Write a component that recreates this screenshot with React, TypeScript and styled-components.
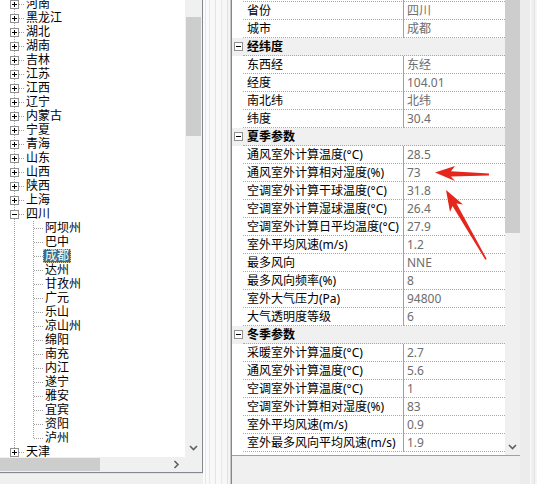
import React from "react";
import styled, { createGlobalStyle } from "styled-components";

const GlobalStyle = createGlobalStyle`
  html, body {
    margin: 0;
    padding: 0;
    background: #f0f0f0;
  }
  body {
    font-family: "Noto Sans", "Noto Sans CJK SC", sans-serif;
    font-size: 12px;
  }
`;

const DOT = "#a0a0a0";

const provincesBefore = [
  "河南", "黑龙江", "湖北", "湖南", "吉林", "江苏", "江西", "辽宁",
  "内蒙古", "宁夏", "青海", "山东", "山西", "陕西", "上海",
];
const sichuanCities = [
  "阿坝州", "巴中", "成都", "达州", "甘孜州", "广元", "乐山", "凉山州",
  "绵阳", "南充", "内江", "遂宁", "雅安", "宜宾", "资阳", "泸州",
];
const provincesAfter = ["天津"];

type Prop = { name: string; value: string };
type Section = { title?: string; items: Prop[] };

// first entry is the row scrolled just above the top edge
const sections: Section[] = [
  {
    items: [
      { name: "", value: "" },
      { name: "省份", value: "四川" },
      { name: "城市", value: "成都" },
    ],
  },
  {
    title: "经纬度",
    items: [
      { name: "东西经", value: "东经" },
      { name: "经度", value: "104.01" },
      { name: "南北纬", value: "北纬" },
      { name: "纬度", value: "30.4" },
    ],
  },
  {
    title: "夏季参数",
    items: [
      { name: "通风室外计算温度(°C)", value: "28.5" },
      { name: "通风室外计算相对湿度(%)", value: "73" },
      { name: "空调室外计算干球温度(°C)", value: "31.8" },
      { name: "空调室外计算湿球温度(°C)", value: "26.4" },
      { name: "空调室外计算日平均温度(°C)", value: "27.9" },
      { name: "室外平均风速(m/s)", value: "1.2" },
      { name: "最多风向", value: "NNE" },
      { name: "最多风向频率(%)", value: "8" },
      { name: "室外大气压力(Pa)", value: "94800" },
      { name: "大气透明度等级", value: "6" },
    ],
  },
  {
    title: "冬季参数",
    items: [
      { name: "采暖室外计算温度(°C)", value: "2.7" },
      { name: "通风室外计算温度(°C)", value: "5.6" },
      { name: "空调室外计算温度(°C)", value: "1" },
      { name: "空调室外计算相对湿度(%)", value: "83" },
      { name: "室外平均风速(m/s)", value: "0.9" },
      { name: "室外最多风向平均风速(m/s)", value: "1.9" },
    ],
  },
];

/* ---------- layout ---------- */

const Window = styled.div`
  position: relative;
  width: 537px;
  height: 484px;
  overflow: hidden;
  display: flex;
  background: #f0f0f0;
  font-family: "Noto Sans", "Noto Sans CJK SC", sans-serif;
  font-size: 12px;
  color: #000;
`;

const LeftColumn = styled.div`
  width: 203px;
  flex: none;
  display: flex;
  flex-direction: column;
`;

const TreeFrame = styled.div`
  display: grid;
  grid-template-columns: 185px 17px;
  grid-template-rows: 457px 15px;
  border-right: 1px solid #828790;
  border-bottom: 1px solid #828790;
  background: #fff;
`;

const BottomStrip = styled.div`
  flex: 1;
  background: #f0f0f0;
  border-top: 1px solid #e3e3e3;
`;

const Splitter = styled.div`
  width: 28px;
  flex: none;
  background: linear-gradient(
    to right,
    #fbfbfb 0 2px,
    #e6e6e6 2px 3px,
    #fafafa 3px 6px,
    #e9e9e9 6px 7px,
    #f8f8f8 7px 12px,
    #e4e4e4 12px 13px,
    #f9f9f9 13px 18px,
    #e8e8e8 18px 19px,
    #f7f7f7 19px 24px,
    #e2e2e2 24px 25px,
    #f4f4f4 25px 27px,
    #c9c9c9 27px 28px
  );
`;

const RightPane = styled.div`
  width: 288px;
  flex: none;
  display: flex;
  flex-direction: column;
  border-left: 1px solid #828790;
`;

const RightEdge = styled.div`
  flex: 1;
  background: linear-gradient(
    to right,
    #ececec 0 10px,
    #fafafa 10px 11px,
    #efefef 11px 14px,
    #e2e2e2 14px 15px,
    #f5f5f5 15px 17px
  );
`;

/* ---------- tree ---------- */

const TreeViewport = styled.div`
  overflow: hidden;
  background: #fff;
`;

const TreeList = styled.div`
  margin-top: -3px;
`;

const TreeRow = styled.div`
  display: flex;
  align-items: center;
  height: 14px;
  white-space: nowrap;
`;

const Lines = styled.svg`
  display: block;
  flex: none;
`;

const NodeLabel = styled.span<{ $selected?: boolean }>`
  display: block;
  height: 14px;
  line-height: 14px;
  padding: 0 2px;
  box-sizing: border-box;
  background: ${(p) => (p.$selected ? "#3c6e8c" : "transparent")};
  color: ${(p) => (p.$selected ? "#fff" : "#000")};
  outline: ${(p) => (p.$selected ? "1px dotted #d8c79a" : "none")};
  outline-offset: -1px;
`;

function Expander({ open }: { open: boolean }) {
  return (
    <>
      <rect x="10.5" y="3.5" width="8" height="8" fill="#fff" stroke="#919191" />
      <line x1="12" y1="7.5" x2="17" y2="7.5" stroke="#000" />
      {!open && <line x1="14.5" y1="5" x2="14.5" y2="10" stroke="#000" />}
    </>
  );
}

function ProvinceNode({ name, open }: { name: string; open?: boolean }) {
  return (
    <TreeRow>
      <Lines width="24" height="14">
        <line x1="14.5" y1="0" x2="14.5" y2="14" stroke={DOT} strokeDasharray="1 1" />
        <line x1="19" y1="7.5" x2="24" y2="7.5" stroke={DOT} strokeDasharray="1 1" />
        <Expander open={!!open} />
      </Lines>
      <NodeLabel>{name}</NodeLabel>
    </TreeRow>
  );
}

function CityNode({ name, last, selected }: { name: string; last?: boolean; selected?: boolean }) {
  return (
    <TreeRow>
      <Lines width="43" height="14">
        <line x1="14.5" y1="0" x2="14.5" y2="14" stroke={DOT} strokeDasharray="1 1" />
        <line x1="33.5" y1="0" x2="33.5" y2={last ? 8 : 14} stroke={DOT} strokeDasharray="1 1" />
        <line x1="34" y1="7.5" x2="43" y2="7.5" stroke={DOT} strokeDasharray="1 1" />
      </Lines>
      <NodeLabel $selected={selected}>{name}</NodeLabel>
    </TreeRow>
  );
}

/* ---------- scrollbars ---------- */

const VBar = styled.div<{ $width: number }>`
  width: ${(p) => p.$width}px;
  display: flex;
  flex-direction: column;
  background: #f0f0f0;
`;

const HBar = styled.div`
  display: flex;
  background: #f0f0f0;
`;

const Track = styled.div<{ $size?: number }>`
  flex: ${(p) => (p.$size ? `0 0 ${p.$size}px` : "1")};
`;

const VThumb = styled.div<{ $size: number; $inset?: number }>`
  flex: 0 0 ${(p) => p.$size}px;
  margin: 0 ${(p) => p.$inset ?? 1}px;
  background: #cdcdcd;
`;

const HThumb = styled.div<{ $size: number }>`
  flex: 0 0 ${(p) => p.$size}px;
  margin: 1px 0;
  background: #cdcdcd;
`;

const ArrowButton = styled.div<{ $size: number }>`
  flex: 0 0 ${(p) => p.$size}px;
  display: flex;
  align-items: center;
  justify-content: center;
`;

const Corner = styled.div`
  background: #f0f0f0;
`;

function Chevron({ dir }: { dir: "down" | "right" }) {
  const pts = dir === "down" ? "1,2 4.5,5.5 8,2" : "2.5,1 6,4.5 2.5,8";
  return (
    <svg width="9" height="9">
      <polyline points={pts} fill="none" stroke="#606060" strokeWidth="1.6" />
    </svg>
  );
}

/* ---------- property grid ---------- */

const GridArea = styled.div`
  height: 455px;
  display: flex;
`;

const RowsViewport = styled.div`
  width: 273px;
  overflow: hidden;
  background: #fff;
`;

const RowList = styled.div`
  margin-top: -16px;
`;

const PropRow = styled.div`
  display: flex;
  height: 18px;
`;

const Gutter = styled.div<{ $shaded?: boolean }>`
  width: 11px;
  flex: none;
  background: ${(p) => (p.$shaded ? "#f0f0f0" : "#fff")};
`;

const Cell = styled.div`
  box-sizing: border-box;
  height: 18px;
  line-height: 17px;
  white-space: nowrap;
  overflow: hidden;
  border-bottom: 1px dotted #a8a8a8;
`;

const NameCell = styled(Cell)`
  width: 161px;
  flex: none;
  padding-left: 4px;
  border-right: 1px solid #a0a0a0;
`;

const ValueCell = styled(Cell)`
  flex: 1;
  padding-left: 3px;
  color: #6d6d6d;
`;

const CategoryCell = styled(Cell)`
  flex: 1;
  padding-left: 4px;
  font-weight: bold;
  background: #f0f0f0;
`;

const HelpPane = styled.div`
  flex: 1;
  border-top: 1px solid #a0a0a0;
  background: #f0f0f0;
`;

function CategoryRow({ title }: { title: string }) {
  return (
    <PropRow>
      <Gutter $shaded>
        <Lines width="11" height="18">
          <rect x="2.5" y="4.5" width="8" height="8" fill="#fff" stroke="#919191" />
          <line x1="4" y1="8.5" x2="9" y2="8.5" stroke="#000" />
        </Lines>
      </Gutter>
      <CategoryCell>{title}</CategoryCell>
    </PropRow>
  );
}

function PropertyRow({ name, value }: Prop) {
  return (
    <PropRow>
      <Gutter />
      <NameCell>{name}</NameCell>
      <ValueCell>{value}</ValueCell>
    </PropRow>
  );
}

/* ---------- callout arrows drawn over the grid ---------- */

const Callouts = styled.svg`
  position: absolute;
  left: 0;
  top: 0;
  pointer-events: none;
`;

export default function App() {
  return (
    <>
      <GlobalStyle />
      <Window>
        <LeftColumn>
          <TreeFrame>
            <TreeViewport>
              <TreeList>
                {provincesBefore.map((p) => (
                  <ProvinceNode key={p} name={p} />
                ))}
                <ProvinceNode name="四川" open />
                {sichuanCities.map((c, i) => (
                  <CityNode
                    key={c}
                    name={c}
                    selected={c === "成都"}
                    last={i === sichuanCities.length - 1}
                  />
                ))}
                {provincesAfter.map((p) => (
                  <ProvinceNode key={p} name={p} />
                ))}
              </TreeList>
            </TreeViewport>
            <VBar $width={17}>
              <Track $size={17} />
              <VThumb $size={119} />
              <Track />
              <ArrowButton $size={17}>
                <Chevron dir="down" />
              </ArrowButton>
            </VBar>
            <HBar>
              <HThumb $size={100} />
              <Track />
              <ArrowButton $size={17}>
                <Chevron dir="right" />
              </ArrowButton>
            </HBar>
            <Corner />
          </TreeFrame>
          <BottomStrip />
        </LeftColumn>

        <Splitter />

        <RightPane>
          <GridArea>
            <RowsViewport>
              <RowList>
                {sections.map((s, i) => (
                  <React.Fragment key={i}>
                    {s.title && <CategoryRow title={s.title} />}
                    {s.items.map((it, j) => (
                      <PropertyRow key={j} name={it.name} value={it.value} />
                    ))}
                  </React.Fragment>
                ))}
              </RowList>
            </RowsViewport>
            <VBar $width={15}>
              <VThumb $size={233} $inset={0} />
              <Track />
              <ArrowButton $size={15}>
                <Chevron dir="down" />
              </ArrowButton>
            </VBar>
          </GridArea>
          <HelpPane />
        </RightPane>

        <RightEdge />

        <Callouts width="537" height="484">
          <polygon
            points="435,172.5 455,166 451,171.3 489,173.4 489,175.6 451,176.6 455,181"
            fill="#e5261c"
          />
          <polygon
            points="446,190 463,204.4 456.5,203.6 486.7,258.9 485.3,259.7 452.5,205.9 450,211.9"
            fill="#e5261c"
          />
        </Callouts>
      </Window>
    </>
  );
}
